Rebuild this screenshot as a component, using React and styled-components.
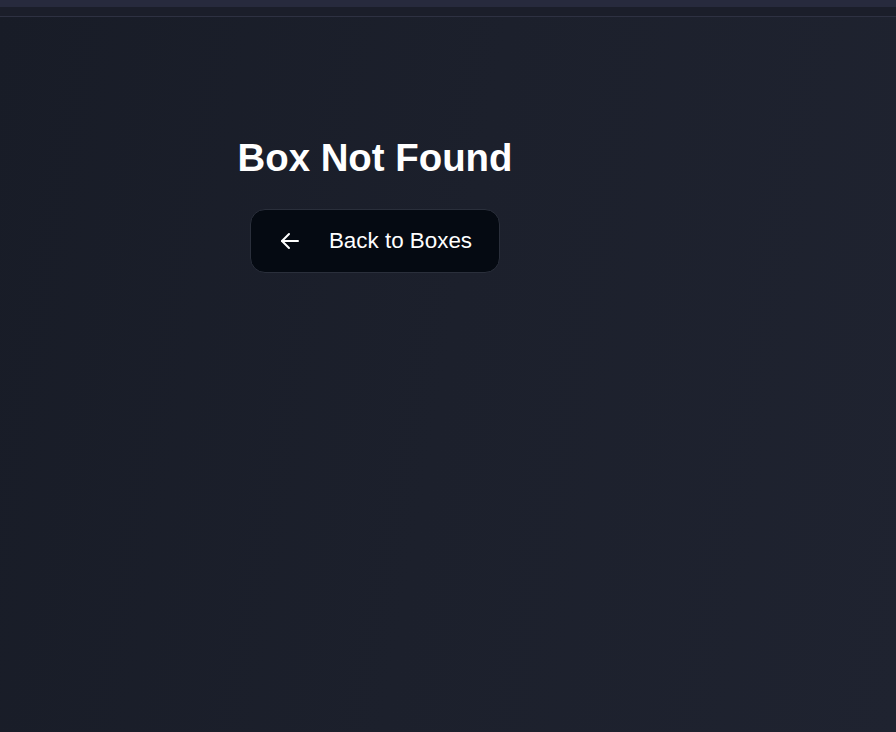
import styled, { createGlobalStyle } from 'styled-components';

const GlobalStyle = createGlobalStyle`
  html, body {
    margin: 0;
    padding: 0;
    height: 100%;
  }
  body {
    font-family: "Liberation Sans", Arial, sans-serif;
    background: #1b1f2b;
  }
  #root {
    min-height: 100vh;
  }
`;

const Page = styled.div`
  min-height: 100vh;
  display: flex;
  flex-direction: column;
  background: linear-gradient(100deg, #181c27 0%, #1c202c 50%, #1f2330 100%);
`;

const TopBar = styled.header`
  display: flex;
  flex-direction: column;
  border-bottom: 1px solid #2e3142;
`;

const Strip = styled.div`
  height: 7px;
  background: #272a3d;
`;

const SubStrip = styled.div`
  height: 9px;
  background: #1b1e2a;
`;

const Main = styled.main`
  width: 750px;
  display: flex;
  flex-direction: column;
  align-items: center;
  padding-top: 119px;
`;

const Title = styled.h1`
  margin: 0;
  font-size: 38.4px;
  font-weight: 700;
  line-height: 44px;
  color: #ffffff;
`;

const BackButton = styled.button`
  margin-top: 29px;
  height: 64px;
  display: flex;
  align-items: center;
  gap: 27px;
  padding: 0 27px 0 27px;
  background: #050a12;
  border: 1px solid #2a2f3b;
  border-radius: 15px;
  color: #ffffff;
  font-family: "Liberation Sans", Arial, sans-serif;
  font-size: 22.4px;
  cursor: pointer;

  svg {
    flex-shrink: 0;
  }
`;

function ArrowLeft() {
  return (
    <svg width="24" height="24" viewBox="0 0 24 24" fill="none" stroke="currentColor"
      strokeWidth="2" strokeLinecap="round" strokeLinejoin="round">
      <path d="M11 5 4 12l7 7" />
      <path d="M20 12H4" />
    </svg>
  );
}

export default function App() {
  return (
    <>
      <GlobalStyle />
      <Page>
        <TopBar>
          <Strip />
          <SubStrip />
        </TopBar>
        <Main>
          <Title>Box Not Found</Title>
          <BackButton>
            <ArrowLeft />
            Back to Boxes
          </BackButton>
        </Main>
      </Page>
    </>
  );
}
